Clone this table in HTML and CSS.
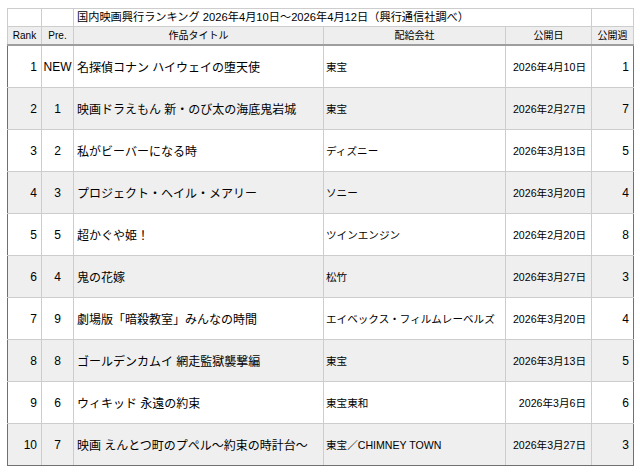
FILE: index.html
```html
<!DOCTYPE html>
<html lang="ja">
<head>
<meta charset="utf-8">
<link rel="stylesheet" href="styles.css">
</head>
<body>
<table class="rank-table">
  <colgroup>
    <col class="c-rank"><col class="c-pre"><col class="c-title"><col class="c-dist"><col class="c-date"><col class="c-week">
  </colgroup>
  <thead>
    <tr class="caption-row">
      <td></td><td></td>
      <td colspan="3" class="caption">国内映画興行ランキング 2026年4月10日〜2026年4月12日（興行通信社調べ）</td>
      <td></td>
    </tr>
    <tr class="head-row">
      <th>Rank</th><th>Pre.</th><th>作品タイトル</th><th>配給会社</th><th>公開日</th><th>公開週</th>
    </tr>
  </thead>
  <tbody>
    <tr><td class="num">1</td><td class="pre">NEW</td><td class="title">名探偵コナン ハイウェイの堕天使</td><td class="dist">東宝</td><td class="date">2026年4月10日</td><td class="week">1</td></tr>
    <tr class="alt"><td class="num">2</td><td class="pre">1</td><td class="title">映画ドラえもん 新・のび太の海底鬼岩城</td><td class="dist">東宝</td><td class="date">2026年2月27日</td><td class="week">7</td></tr>
    <tr><td class="num">3</td><td class="pre">2</td><td class="title">私がビーバーになる時</td><td class="dist">ディズニー</td><td class="date">2026年3月13日</td><td class="week">5</td></tr>
    <tr class="alt"><td class="num">4</td><td class="pre">3</td><td class="title">プロジェクト・ヘイル・メアリー</td><td class="dist">ソニー</td><td class="date">2026年3月20日</td><td class="week">4</td></tr>
    <tr><td class="num">5</td><td class="pre">5</td><td class="title">超かぐや姫！</td><td class="dist">ツインエンジン</td><td class="date">2026年2月20日</td><td class="week">8</td></tr>
    <tr class="alt"><td class="num">6</td><td class="pre">4</td><td class="title">鬼の花嫁</td><td class="dist">松竹</td><td class="date">2026年3月27日</td><td class="week">3</td></tr>
    <tr><td class="num">7</td><td class="pre">9</td><td class="title">劇場版「暗殺教室」みんなの時間</td><td class="dist">エイベックス・フィルムレーベルズ</td><td class="date">2026年3月20日</td><td class="week">4</td></tr>
    <tr class="alt"><td class="num">8</td><td class="pre">8</td><td class="title">ゴールデンカムイ 網走監獄襲撃編</td><td class="dist">東宝</td><td class="date">2026年3月13日</td><td class="week">5</td></tr>
    <tr><td class="num">9</td><td class="pre">6</td><td class="title">ウィキッド 永遠の約束</td><td class="dist">東宝東和</td><td class="date">2026年3月6日</td><td class="week">6</td></tr>
    <tr class="alt"><td class="num">10</td><td class="pre">7</td><td class="title">映画 えんとつ町のプペル〜約束の時計台〜</td><td class="dist">東宝／CHIMNEY TOWN</td><td class="date">2026年3月27日</td><td class="week">3</td></tr>
  </tbody>
</table>
</body>
</html>
```
FILE: styles.css
```css
html, body {
  margin: 0;
  padding: 0;
  background: #ffffff;
}
body {
  padding: 8px 0 0 7px;
  font-family: "Liberation Sans", "Noto Sans CJK JP", sans-serif;
  color: #000000;
}
.rank-table {
  border-collapse: collapse;
  table-layout: fixed;
  width: 626px;
}
.c-rank { width: 34px; }
.c-pre { width: 32px; }
.c-title { width: 250px; }
.c-dist { width: 182px; }
.c-date { width: 86px; }
.c-week { width: 42px; }

.rank-table td, .rank-table th {
  border: 1px solid #cdcdcd;
  padding: 0;
  white-space: nowrap;
  overflow: hidden;
}
.caption-row td {
  height: 17px;
  font-size: 11px;
  line-height: 17px;
}
.caption {
  padding-left: 3px !important;
  text-align: left;
  font-size: 11.2px !important;
}
.head-row th {
  height: 17px;
  font-size: 10px;
  font-weight: normal;
  line-height: 17px;
  background: #eeeeee;
  text-align: center;
  border-bottom: 2px solid #9e9e9e;
}
tbody tr td {
  height: 41px;
  font-size: 12px;
  vertical-align: middle;
}
tbody tr.alt td {
  background: #efefef;
}
tbody tr td:first-child {
  border-left: 1px solid #707070;
}
tbody tr td:last-child {
  border-right: 1px solid #707070;
}
tbody tr:last-child td {
  border-bottom: 1px solid #707070;
}
.num {
  text-align: right;
  padding-right: 4px !important;
}
.pre {
  text-align: center;
}
.title {
  padding-left: 3px !important;
}
.dist {
  font-size: 10.6px !important;
  padding-left: 2px !important;
}
.date {
  font-size: 10.6px !important;
  text-align: right;
  padding-right: 5px !important;
}
.week {
  text-align: right;
  padding-right: 4px !important;
}
```
